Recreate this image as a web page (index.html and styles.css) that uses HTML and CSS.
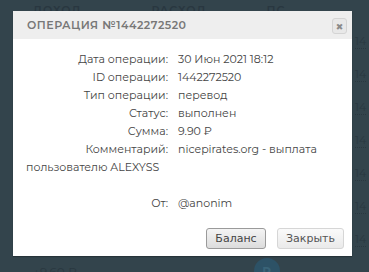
FILE: index.html
```html
<!DOCTYPE html>
<html lang="ru">
<head>
<meta charset="utf-8">
<link rel="stylesheet" href="styles.css">
</head>
<body>
<div class="page">
  <div class="thead">
    <span class="th th1">ДОХОД</span>
    <span class="th th2">РАСХОД</span>
    <span class="th th3">ПС</span>
  </div>
  <div class="side">
    <span class="num">14</span>
    <span class="num">14</span>
    <span class="num">14</span>
    <span class="num">14</span>
    <span class="num">14</span>
    <span class="num">14</span>
    <span class="num">14</span>
  </div>
  <div class="lastrow">
    <span class="amt">+9.60 ₽</span>
    <span class="dash">—</span>
    <span class="ps">P</span>
  </div>
</div>

<div class="modal">
  <div class="modal-head">
    <span class="title">ОПЕРАЦИЯ №1442272520</span>
    <span class="close">✖</span>
  </div>
  <div class="modal-body">
    <div class="info">
      <span class="lbl">Дата операции:</span><span class="val">30 Июн 2021 18:12</span><br>
      <span class="lbl">ID операции:</span><span class="val">1442272520</span><br>
      <span class="lbl">Тип операции:</span><span class="val">перевод</span><br>
      <span class="lbl">Статус:</span><span class="val">выполнен</span><br>
      <span class="lbl">Сумма:</span><span class="val">9.90 ₽</span><br>
      <span class="lbl">Комментарий:</span>nicepirates.org - выплата пользователю ALEXYSS<br>
      <br>
      <span class="lbl">От:</span><span class="val">@anonim</span>
    </div>
    <div class="actions">
      <button class="btn btn-main">Баланс</button>
      <button class="btn btn-light">Закрыть</button>
    </div>
  </div>
</div>
</body>
</html>
```
FILE: styles.css
```css
html, body {
  margin: 0;
  padding: 0;
}
body {
  width: 369px;
  height: 272px;
  overflow: hidden;
  background: #33444c;
  font-family: "Montserrat", "Noto Sans", "DejaVu Sans", sans-serif;
  position: relative;
}
.page {
  position: relative;
  width: 369px;
  height: 272px;
  color: #293740;
}
.thead {
  display: flex;
  padding: 3px 0 0 33px;
  font-size: 11px;
  font-weight: 600;
  letter-spacing: 1px;
}
.th2 { margin-left: 70px; }
.th3 { margin-left: 60px; }
.side {
  position: absolute;
  left: 355px;
  top: 34px;
  display: flex;
  flex-direction: column;
  gap: 18px;
  font-size: 11px;
  color: #2a3840;
}
.num {
  border-bottom: 1px dotted #2a3840;
  line-height: 14px;
}
.lastrow {
  position: absolute;
  left: 33px;
  top: 258px;
  display: flex;
  align-items: center;
  font-size: 12px;
  color: #2a3840;
}
.dash { margin-left: 90px; }
.ps {
  margin-left: 75px;
  width: 26px;
  height: 26px;
  border-radius: 50%;
  background: #2d5266;
  color: #3a6478;
  font-weight: 700;
  display: flex;
  align-items: center;
  justify-content: center;
}

.modal {
  position: absolute;
  left: 13px;
  top: 11px;
  width: 339px;
  height: 245px;
  background: #fff;
  box-shadow: 0 1px 1px rgba(0,0,0,0.25);
}
.modal-head {
  height: 28px;
  background: #eeeeee;
  display: flex;
  align-items: center;
  justify-content: space-between;
  padding: 0 5px 0 14px;
}
.title {
  font-size: 11px;
  font-weight: 600;
  letter-spacing: 0.5px;
  color: #777;
}
.close {
  width: 13px;
  height: 14px;
  border: 1px solid #d4d4d4;
  border-radius: 3px;
  background: #e8e8e8;
  color: #8a8a8a;
  font-size: 9px;
  display: flex;
  align-items: center;
  justify-content: center;
  margin-top: 2px;
}
.modal-body {
  padding: 11px 13px 0 13px;
}
.info {
  font-size: 11px;
  line-height: 18px;
  color: #444;
}
.lbl {
  display: inline-block;
  width: 142px;
  text-align: right;
  margin-right: 10px;
}
.actions {
  display: flex;
  justify-content: flex-end;
  gap: 11px;
  margin-top: 16px;
  margin-right: -5px;
}
.btn {
  height: 21px;
  padding: 0;
  font-family: "DejaVu Sans", Verdana, sans-serif;
  font-size: 11px;
  font-weight: 400;
  color: #444;
  border-radius: 3px;
}
.btn-main {
  width: 60px;
  border: 1px solid #9a9a9a;
  background: linear-gradient(#f4f4f4, #dcdcdc);
}
.btn-light {
  width: 67px;
  border: 1px solid #d6d6d6;
  background: linear-gradient(#fafafa, #eaeaea);
  color: #555;
}
```
